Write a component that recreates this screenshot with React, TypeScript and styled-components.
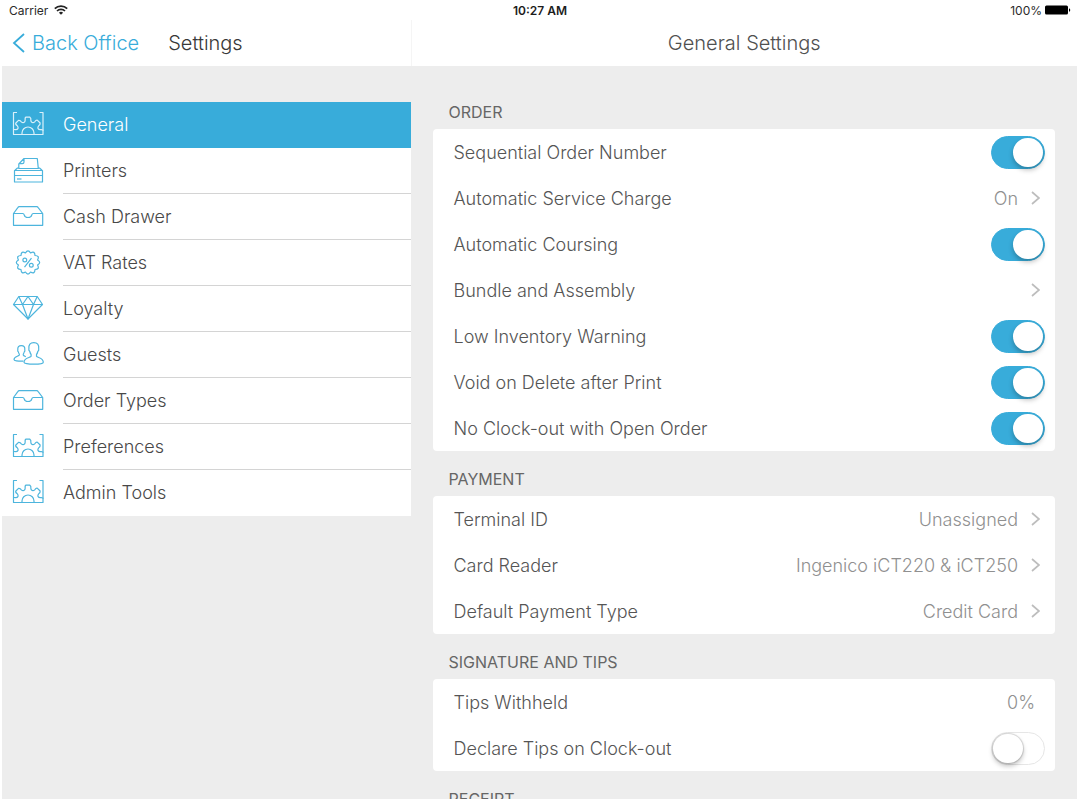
import React, { useState } from "react";
import styled, { createGlobalStyle, css } from "styled-components";

const blue = "#38acda";
const grey = "#ededed";

const GlobalStyle = createGlobalStyle`
  *, *::before, *::after { box-sizing: border-box; }
  body {
    margin: 0;
    background: #fff;
    color: #555;
    font-family: Inter, "Liberation Sans", sans-serif;
    font-size: 18px;
    font-weight: 300;
  }
  button, input { font: inherit; color: inherit; }
`;

const Page = styled.div`
  display: flex;
  flex-direction: column;
  height: 100vh;
  padding: 0 5px 3px 2px;
  overflow: hidden;
`;

const StatusBar = styled.div`
  display: grid;
  grid-template-columns: 1fr auto 1fr;
  align-items: center;
  flex: none;
  height: 20px;
  padding: 0 6px 0 7px;
  font-size: 12px;
  font-weight: 400;
  color: #2b2b2b;
`;

const StatusGroup = styled.div<{ $end?: boolean }>`
  display: flex;
  align-items: center;
  gap: ${(p) => (p.$end ? 3 : 6)}px;
  justify-content: ${(p) => (p.$end ? "flex-end" : "flex-start")};
`;

const Clock = styled.time`
  font-weight: 600;
  color: #1c1c1c;
`;

const Columns = styled.div`
  display: grid;
  grid-template-columns: 38% 1fr;
  flex: 1;
  min-height: 0;
`;

const Column = styled.div`
  display: flex;
  flex-direction: column;
  min-height: 0;
  min-width: 0;
`;

const NavBar = styled.header<{ $centered?: boolean }>`
  display: flex;
  align-items: center;
  flex: none;
  height: 46px;
  gap: 29px;
  padding: 0 10px;
  background: #fff;
  ${(p) =>
    p.$centered &&
    css`
      justify-content: center;
      border-left: 1px solid #f5f5f5;
    `}
`;

const BackLink = styled.a`
  display: flex;
  align-items: center;
  gap: 7px;
  font-size: 20px;
  color: ${blue};
  text-decoration: none;
`;

const Title = styled.h1<{ $muted?: boolean }>`
  margin: 0;
  font-size: 20px;
  font-weight: 300;
  color: ${(p) => (p.$muted ? "#505050" : "#383838")};
`;

const Sidebar = styled.nav`
  flex: 1;
  padding-top: 36px;
  background: ${grey};
  overflow: hidden;
`;

const MenuList = styled.ul`
  margin: 0;
  padding: 0;
  list-style: none;
  background: #fff;
`;

const MenuLabel = styled.span`
  display: flex;
  align-items: center;
  flex: 1;
  height: 46px;
  border-bottom: 1px solid #d4d4d4;
`;

const MenuLink = styled.a<{ $active: boolean }>`
  display: flex;
  align-items: center;
  gap: 18px;
  height: 46px;
  padding-left: 10px;
  text-decoration: none;
  color: ${(p) => (p.$active ? "#fff" : "#484848")};
  background: ${(p) => (p.$active ? blue : "#fff")};

  svg {
    flex: none;
    color: ${(p) => (p.$active ? "#d9f0fa" : "#4db5dd")};
  }

  ${MenuLabel} {
    ${(p) => p.$active && "border-bottom-color: transparent;"}
  }
`;

const MenuItem = styled.li`
  &:last-child ${MenuLabel} {
    border-bottom-color: transparent;
  }
`;

const Content = styled.main`
  flex: 1;
  min-height: 0;
  padding: 18px 22px 0;
  background: ${grey};
  overflow: hidden;
`;

const SectionTitle = styled.h2`
  display: flex;
  align-items: center;
  height: 45px;
  margin: 0;
  padding: 10px 16px 0;
  font-size: 16px;
  font-weight: 400;
  color: #666;
`;

const Card = styled.div`
  background: #fff;
  border-radius: 4px;
`;

const rowStyle = css`
  display: flex;
  align-items: center;
  width: 100%;
  height: 46px;
  padding: 0 10px 0 21px;
`;

const ControlRow = styled.label`
  ${rowStyle}
`;

const LinkRow = styled.button`
  ${rowStyle}
  padding-right: 15px;
  border: 0;
  background: none;
  text-align: left;
  cursor: pointer;
`;

const RowLabel = styled.span`
  flex: 1;
`;

const RowValue = styled.span`
  margin-right: 13px;
  color: #909090;
`;

const ValueInput = styled.input`
  width: 80px;
  margin-right: 10px;
  padding: 0;
  border: 0;
  outline: 0;
  background: none;
  text-align: right;
  color: #909090;
`;

const Switch = styled.input`
  appearance: none;
  flex: none;
  width: 54px;
  height: 33px;
  margin: 0;
  padding: 1px;
  border: 1px solid #e6e6e6;
  border-radius: 17px;
  background: #fff;
  cursor: pointer;

  &::before {
    content: "";
    display: block;
    width: 30px;
    height: 29px;
    border-radius: 15px;
    background: #fff;
    box-shadow: 0 0 1px 1px rgba(0, 0, 0, 0.14), 0 3px 5px rgba(0, 0, 0, 0.25);
  }

  &:checked {
    border-color: ${blue};
    background: ${blue};
  }

  &:checked::before {
    margin-left: 20px;
    box-shadow: 0 3px 5px rgba(0, 0, 0, 0.25);
  }
`;

const Icon = ({ children }: { children: React.ReactNode }) => (
  <svg width="33" height="28" viewBox="0 0 33 28" fill="none" stroke="currentColor" strokeWidth="1.2" strokeLinejoin="round" aria-hidden="true">
    {children}
  </svg>
);

const polar = (cx: number, cy: number, r: number, degrees: number) => {
  const a = (degrees * Math.PI) / 180;
  return `${(cx + Math.sin(a) * r).toFixed(2)} ${(cy - Math.cos(a) * r).toFixed(2)}`;
};

// Upper half of an eight-toothed gear, from the left tooth to the right one.
const gearPath = (() => {
  const at = (r: number, deg: number) => polar(16, 21.5, r, deg);
  let d = `M${at(14.8, -80)}`;
  for (let tooth = -90; tooth < 90; tooth += 45) {
    d += `Q${at(14.6, tooth + 13)} ${at(12.6, tooth + 13)}`;
    d += `Q${at(11, tooth + 15)} ${at(10.8, tooth + 22.5)}`;
    d += `Q${at(11, tooth + 30)} ${at(12.6, tooth + 32)}`;
    d += `Q${at(15.4, tooth + 33)} ${at(15.4, tooth + 38)}`;
    if (tooth < 45) {
      d += `L${at(15.4, tooth + 52)}`;
    }
  }
  return d;
})();

const GearIcon = () => (
  <Icon>
    <path d="M5 1.500H1.500v22h29.500v-22H27.500" />
    <path d={gearPath} />
    <path d="M10 23.500v-1.500a6 6 0 0 1 12 0v1.500" />
  </Icon>
);

const PrinterIcon = () => (
  <Icon>
    <path d="M2.500 13.500h28v11.500h-28z M2.500 18.500h28" />
    <path d="M3 13.300l2.500-2.300h1.300M30 13.300l-2.500-2.300h-1.400" />
    <path d="M6.800 11.500V7l5.200-5.500h13.300l1 10z M12 1.700V5c0 1.200-.6 1.700-1.700 1.700H7" />
    <path d="M5 22h4.500" />
  </Icon>
);

const TrayIcon = () => (
  <Icon>
    <path d="M1.500 10.500L6 4.300q.4-.6 1.200-.6h17.600q.8 0 1.200.6l4.700 6.200v11.800H1.500z" />
    <path d="M1.500 10.500h9.200c1 0 1.300.5 1.500 1.300.4 1.700 1.700 2.700 3.800 2.700s3.400-1 3.800-2.700c.2-.8.5-1.300 1.500-1.300h9.400" />
  </Icon>
);

const sealPath = (() => {
  let d = `M${polar(16, 13.5, 9.9, -15)}`;
  for (let point = 0; point < 360; point += 30) {
    d += `Q${polar(16, 13.5, 13.8, point)} ${polar(16, 13.5, 9.9, point + 15)}`;
  }
  return d + "Z";
})();

const PercentIcon = () => (
  <Icon>
    <path d={sealPath} />
    <path d="M19.500 9.200l-7 9" />
    <circle cx="12.800" cy="11" r="1.900" />
    <circle cx="19.300" cy="16.300" r="1.900" />
  </Icon>
);

const DiamondIcon = () => (
  <Icon>
    <path d="M6.800 1.500h18.400l5.300 8L16 24 1.500 9.500z M1.500 9.500h29" />
    <path d="M6.800 1.500l3.700 8L16 24l5.500-14.500 3.700-8M10.500 9.500l5.500-8 5.500 8" />
  </Icon>
);

const GuestsIcon = () => (
  <Icon>
    <path d="M17.800 10.500c-.9-.7-1.200-1.700-.9-2.900-.4-3.800 1.300-6 4.900-6s5.300 2.200 4.900 6c.3 1.200 0 2.200-.9 2.900-.4 1.700-.8 2.400-1.300 3v1.700c.5 1.600 6.800 1.200 6.800 6 0 1.300-3.800 2-9.500 2s-9.800-.7-9.800-2c0-4.800 6.600-4.400 7.100-6v-1.700c-.5-.6-.9-1.300-1.300-3z" />
    <path d="M13.800 15.600c-1.300-.5-2.300-.8-2.500-1.600v-1c.4-.5.7-1 .9-2 .7-.5.900-1.200.6-2.100.3-2.800-.9-4.300-3.500-4.300s-3.800 1.500-3.500 4.300c-.3.900-.1 1.600.6 2.100.2 1 .5 1.500.9 2v1c-.4 1.500-5.300 1.300-5.300 4.500 0 1.300 3.500 1.800 9.400 1.700" />
  </Icon>
);

const BackIcon = () => (
  <svg width="13" height="20" viewBox="0 0 13 20" fill="none" stroke="currentColor" strokeWidth="1.800" aria-hidden="true">
    <path d="M12 1L2 10l10 9" />
  </svg>
);

const Chevron = () => (
  <svg width="9" height="14" viewBox="0 0 9 14" fill="none" stroke="#bdbdbd" strokeWidth="1.700" aria-hidden="true">
    <path d="M1 1l7 6-7 6" />
  </svg>
);

const WifiIcon = () => (
  <svg width="14" height="10" viewBox="0 0 14 10" fill="none" stroke="#222" strokeWidth="1.700" aria-hidden="true">
    <path d="M.8 3.600a8.800 8.800 0 0 1 12.400 0M3 6a5.700 5.700 0 0 1 8 0" />
    <path d="M7 9.800L4.900 7.700a3 3 0 0 1 4.200 0z" fill="#222" stroke="none" />
  </svg>
);

const BatteryIcon = () => (
  <svg width="26" height="10" viewBox="0 0 26 10" aria-hidden="true">
    <rect x="0" y="0.500" width="23" height="9" rx="1.500" />
    <path d="M24 3.200c1.700.5 1.700 3.100 0 3.600z" />
  </svg>
);

const menu = [
  { label: "General", icon: GearIcon },
  { label: "Printers", icon: PrinterIcon },
  { label: "Cash Drawer", icon: TrayIcon },
  { label: "VAT Rates", icon: PercentIcon },
  { label: "Loyalty", icon: DiamondIcon },
  { label: "Guests", icon: GuestsIcon },
  { label: "Order Types", icon: TrayIcon },
  { label: "Preferences", icon: GearIcon },
  { label: "Admin Tools", icon: GearIcon },
];

type Row =
  | { kind: "switch"; label: string; on: boolean }
  | { kind: "link"; label: string; value?: string }
  | { kind: "input"; label: string; value: string };

const sections: { title: string; rows: Row[] }[] = [
  {
    title: "ORDER",
    rows: [
      { kind: "switch", label: "Sequential Order Number", on: true },
      { kind: "link", label: "Automatic Service Charge", value: "On" },
      { kind: "switch", label: "Automatic Coursing", on: true },
      { kind: "link", label: "Bundle and Assembly" },
      { kind: "switch", label: "Low Inventory Warning", on: true },
      { kind: "switch", label: "Void on Delete after Print", on: true },
      { kind: "switch", label: "No Clock-out with Open Order", on: true },
    ],
  },
  {
    title: "PAYMENT",
    rows: [
      { kind: "link", label: "Terminal ID", value: "Unassigned" },
      { kind: "link", label: "Card Reader", value: "Ingenico iCT220 & iCT250" },
      { kind: "link", label: "Default Payment Type", value: "Credit Card" },
    ],
  },
  {
    title: "SIGNATURE AND TIPS",
    rows: [
      { kind: "input", label: "Tips Withheld", value: "0%" },
      { kind: "switch", label: "Declare Tips on Clock-out", on: false },
    ],
  },
  { title: "RECEIPT", rows: [] },
];

const SettingRow = ({ row }: { row: Row }) => {
  if (row.kind === "link") {
    return (
      <LinkRow type="button">
        <RowLabel>{row.label}</RowLabel>
        {row.value && <RowValue>{row.value}</RowValue>}
        <Chevron />
      </LinkRow>
    );
  }
  return (
    <ControlRow>
      <RowLabel>{row.label}</RowLabel>
      {row.kind === "switch" ? (
        <Switch type="checkbox" role="switch" defaultChecked={row.on} />
      ) : (
        <ValueInput type="text" defaultValue={row.value} />
      )}
    </ControlRow>
  );
};

export default function App() {
  const [active, setActive] = useState("General");

  return (
    <>
      <GlobalStyle />
      <Page>
        <StatusBar>
          <StatusGroup>
            Carrier <WifiIcon />
          </StatusGroup>
          <Clock>10:27 AM</Clock>
          <StatusGroup $end>
            100% <BatteryIcon />
          </StatusGroup>
        </StatusBar>
        <Columns>
          <Column>
            <NavBar>
              <BackLink href="#back-office">
                <BackIcon />
                Back Office
              </BackLink>
              <Title>Settings</Title>
            </NavBar>
            <Sidebar>
              <MenuList>
                {menu.map(({ label, icon: ItemIcon }) => (
                  <MenuItem key={label}>
                    <MenuLink
                      href="#settings"
                      $active={label === active}
                      aria-current={label === active ? "page" : undefined}
                      onClick={() => setActive(label)}
                    >
                      <ItemIcon />
                      <MenuLabel>{label}</MenuLabel>
                    </MenuLink>
                  </MenuItem>
                ))}
              </MenuList>
            </Sidebar>
          </Column>
          <Column>
            <NavBar $centered>
              <Title $muted>General Settings</Title>
            </NavBar>
            <Content>
              {sections.map((section) => (
                <section key={section.title}>
                  <SectionTitle>{section.title}</SectionTitle>
                  <Card>
                    {section.rows.map((row) => (
                      <SettingRow key={row.label} row={row} />
                    ))}
                  </Card>
                </section>
              ))}
            </Content>
          </Column>
        </Columns>
      </Page>
    </>
  );
}
